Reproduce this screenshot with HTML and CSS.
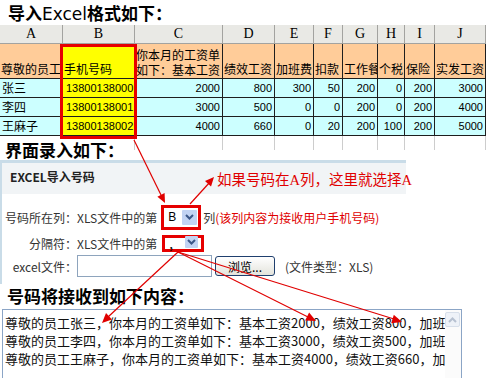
FILE: index.html
```html
<!DOCTYPE html>
<html lang="zh-CN">
<head>
    <meta charset="UTF-8">
    <meta name="viewport" content="width=device-width, initial-scale=1.0">
    <link rel="stylesheet" href="styles.css">
    <title>EXCEL导入号码</title>
</head>
<body>
    <h2 class="title title-first">导入<span class="latin">Excel</span>格式如下：</h2>

    <div class="sheet">
        <div class="grid">
            <div class="cell col">A</div>
            <div class="cell col">B</div>
            <div class="cell col">C</div>
            <div class="cell col">D</div>
            <div class="cell col">E</div>
            <div class="cell col">F</div>
            <div class="cell col">G</div>
            <div class="cell col">H</div>
            <div class="cell col">I</div>
            <div class="cell col">J</div>

            <div class="cell head">尊敬的员工</div>
            <div class="cell head tel">手机号码</div>
            <div class="cell head wrap">你本月的工资单<br>如下：基本工资</div>
            <div class="cell head">绩效工资</div>
            <div class="cell head">加班费</div>
            <div class="cell head">扣款</div>
            <div class="cell head">工作餐</div>
            <div class="cell head">个税</div>
            <div class="cell head">保险</div>
            <div class="cell head">实发工资</div>

            <div class="cell data name">张三</div>
            <div class="cell data tel num-l">13800138000</div>
            <div class="cell data n">2000</div>
            <div class="cell data n">800</div>
            <div class="cell data n">300</div>
            <div class="cell data n">50</div>
            <div class="cell data n">200</div>
            <div class="cell data n">0</div>
            <div class="cell data n">200</div>
            <div class="cell data n">3000</div>

            <div class="cell data name">李四</div>
            <div class="cell data tel num-l">13800138001</div>
            <div class="cell data n">3000</div>
            <div class="cell data n">500</div>
            <div class="cell data n">0</div>
            <div class="cell data n">0</div>
            <div class="cell data n">200</div>
            <div class="cell data n">0</div>
            <div class="cell data n">200</div>
            <div class="cell data n">4000</div>

            <div class="cell data name">王麻子</div>
            <div class="cell data tel num-l">13800138002</div>
            <div class="cell data n">4000</div>
            <div class="cell data n">660</div>
            <div class="cell data n">0</div>
            <div class="cell data n">20</div>
            <div class="cell data n">200</div>
            <div class="cell data n">100</div>
            <div class="cell data n">200</div>
            <div class="cell data n">5000</div>

            <div class="cell blank"></div>
            <div class="cell blank"></div>
            <div class="cell blank"></div>
            <div class="cell blank"></div>
            <div class="cell blank"></div>
            <div class="cell blank"></div>
            <div class="cell blank"></div>
            <div class="cell blank"></div>
            <div class="cell blank"></div>
            <div class="cell blank"></div>
        </div>
        <div class="pick"></div>
    </div>

    <h2 class="title title-second">界面录入如下：</h2>

    <div class="panel">
        <div class="panel-head">
            <span class="panel-name">EXCEL导入号码</span>
            <span class="note">如果号码在A列，这里就选择A</span>
        </div>
        <div class="form">
            <div class="row row-col">
                <span class="label">号码所在列：</span>
                <span class="hint">XLS文件中的第</span>
                <span class="mark mark-col">
                    <span class="combo-val">B</span>
                    <span class="combo-btn">
                        <svg width="9" height="6" viewBox="0 0 9 6"><path d="M1 1 L4.5 4.5 L8 1" fill="none" stroke="#3b5687" stroke-width="2"/></svg>
                    </span>
                </span>
                <span class="after">列<span class="red">(该列内容为接收用户手机号码)</span></span>
            </div>
            <div class="row row-sep">
                <span class="label">分隔符：</span>
                <span class="hint">XLS文件中的第</span>
                <span class="mark mark-sep">
                    <span class="combo-val">，</span>
                    <span class="combo-btn">
                        <svg width="9" height="6" viewBox="0 0 9 6"><path d="M1 1 L4.5 4.5 L8 1" fill="none" stroke="#3b5687" stroke-width="2"/></svg>
                    </span>
                </span>
            </div>
            <div class="row row-file">
                <span class="label">excel文件：</span>
                <span class="file-box"></span>
                <span class="file-btn">浏览...</span>
                <span class="file-type">(文件类型：XLS)</span>
            </div>
        </div>
    </div>

    <h2 class="title title-third">号码将接收到如下内容：</h2>

    <div class="msg">
        <div class="msg-text">
            <div>尊敬的员工张三，你本月的工资单如下：基本工资2000，绩效工资800，加班费300，扣款50</div>
            <div>尊敬的员工李四，你本月的工资单如下：基本工资3000，绩效工资500，加班费0，扣款0</div>
            <div>尊敬的员工王麻子，你本月的工资单如下：基本工资4000，绩效工资660，加班费0，扣款20</div>
        </div>
        <div class="msg-bar">
            <span class="msg-up">
                <svg width="9" height="6" viewBox="0 0 9 6"><path d="M1 5 L4.5 1.5 L8 5" fill="none" stroke="#b7c1d1" stroke-width="2"/></svg>
            </span>
        </div>
    </div>

    <!-- red arrows drawn over the screenshot -->
    <svg class="arrows" width="486" height="378" viewBox="0 0 486 378">
        <g stroke="#e00000" stroke-width="1.2" fill="none">
            <line x1="134" y1="140" x2="162" y2="197"/>
            <line x1="190" y1="204" x2="210" y2="182"/>
            <line x1="178" y1="252" x2="108" y2="317"/>
            <line x1="178" y1="252" x2="308" y2="317"/>
            <line x1="178" y1="252" x2="394" y2="319"/>
        </g>
        <g fill="#e00000">
            <polygon points="165,203 157.4,196.7 164.6,193.1"/>
            <polygon points="214,177 211,186.4 205,181.1"/>
            <polygon points="102,323 106,313 112,319.5"/>
            <polygon points="316,321 305.1,320.5 309.1,312.5"/>
            <polygon points="402,322 391.2,323.3 393.8,314.7"/>
        </g>
    </svg>
</body>
</html>
```

FILE: styles.css
```css
* {
    box-sizing: border-box;
}

body {
    margin: 0;
    width: 486px;
    height: 378px;
    overflow: hidden;
    position: relative;
    background: #fff;
    color: #000;
    font-family: "Noto Sans CJK SC", sans-serif;
}

.title {
    margin: 0;
    font-size: 17px;
    font-weight: bold;
}

.title .latin {
    font-family: "DejaVu Sans", sans-serif;
    font-weight: normal;
}

.title-first {
    height: 25px;
    line-height: 25px;
    padding-left: 8px;
}

.title-second {
    position: relative;
    width: fit-content;
    height: 21px;
    line-height: 21px;
    margin-top: -11px;
    padding: 0 4px 0 5px;
    background: #fff;
}

.title-third {
    height: 24px;
    line-height: 24px;
    padding-left: 7px;
}

/* spreadsheet */
.sheet {
    position: relative;
}

.grid {
    display: grid;
    grid-template-columns: 63px 72px 88px 52px 39px 29px 35px 27px 30px 51px;
    grid-template-rows: 19px 35px 19px 19px 19px 14px;
    font-size: 12px;
}

.cell {
    display: flex;
    align-items: flex-end;
    overflow: hidden;
    white-space: nowrap;
    line-height: 16px;
    padding: 0 1px 1px 2px;
    border-right: 1px solid #1e1e1e;
    border-bottom: 1px solid #1e1e1e;
}

.col {
    align-items: center;
    justify-content: center;
    padding: 0;
    background: #e9e9e5;
    border-color: #a3a3a0;
    font-family: "Liberation Serif", serif;
    font-size: 14px;
}

.head {
    background: #ffcc99;
    padding-left: 1px;
}

.wrap {
    white-space: normal;
    line-height: 15px;
}

.data {
    background: #ccffff;
}

.tel {
    background: #ffff00;
}

.num-l {
    padding-left: 3px;
    font-family: "Liberation Sans", sans-serif;
    font-size: 11px;
}

.n {
    justify-content: flex-end;
    padding-right: 2px;
    font-family: "Liberation Sans", sans-serif;
    font-size: 11px;
}

.blank {
    border-right-color: #cdcdcd;
    border-bottom: none;
}

.pick {
    position: absolute;
    left: 60px;
    top: 19px;
    width: 77px;
    height: 95px;
    border: 3px solid #e60000;
}

/* import panel */
.panel {
    width: 406px;
    border-top: 3px solid #c9dce8;
    border-left: 2px solid #c9dce8;
    font-size: 12px;
}

.panel-head {
    display: flex;
    align-items: flex-start;
    height: 31px;
    padding: 6px 0 0 8px;
    background: #f1f4f6;
}

.panel-name {
    flex: 0 0 207px;
    font-weight: bold;
    line-height: 16px;
    color: #222;
}

.note {
    margin-top: 1px;
    white-space: nowrap;
    color: #e00000;
    font-family: "Liberation Serif", "Noto Sans CJK SC", serif;
    font-size: 14.5px;
    line-height: 20px;
}

.form {
    padding: 10px 0 7px;
}

.row {
    display: flex;
    align-items: center;
    white-space: nowrap;
}

.row-col {
    height: 26px;
}

.row-sep {
    height: 18px;
    margin-top: 4px;
}

.row-file {
    height: 22px;
    margin-top: 3px;
}

.label {
    width: 75px;
    text-align: right;
    color: #333;
}

.hint {
    color: #333;
}

.mark {
    display: flex;
    border: 3px solid #e60000;
}

.mark-col {
    width: 40px;
    height: 25px;
    margin-left: 4px;
    align-items: center;
    padding: 0 1px 0 4px;
}

.mark-sep {
    width: 42px;
    height: 17px;
    margin-left: 5px;
    align-items: flex-start;
    padding: 0 3px 0 3px;
}

.combo-val {
    flex: 1;
    line-height: 12px;
    font-family: "Liberation Sans", "Noto Sans CJK SC", sans-serif;
    font-size: 12px;
}

.mark-sep .combo-val {
    font-family: "Noto Sans CJK SC", sans-serif;
    line-height: 11px;
    margin-top: 1px;
}

.combo-btn {
    display: flex;
    align-items: center;
    justify-content: center;
    width: 15px;
    height: 15px;
    background: #c2d3f3;
    border-radius: 1px;
}

.mark-sep .combo-btn {
    width: 13px;
    height: 12px;
    margin-top: -2px;
}

.after {
    margin-left: 2px;
    color: #333;
}

.red {
    color: #e00000;
}

.file-box {
    width: 135px;
    height: 22px;
    border: 1px solid #8ea4bd;
    background: #fff;
}

.file-btn {
    display: flex;
    align-items: center;
    justify-content: center;
    width: 60px;
    height: 20px;
    margin-left: 3px;
    border: 1px solid #1f3f6e;
    border-radius: 3px;
    background: linear-gradient(#ffffff, #e4e4dc);
}

.file-type {
    margin-left: 10px;
    color: #333;
}

/* message preview */
.msg {
    display: flex;
    width: 460px;
    height: 80px;
    margin: 1px 0 0 2px;
    border: 1px solid #8ba5c6;
}

.msg-text {
    flex: 1;
    overflow: hidden;
    white-space: nowrap;
    padding: 4px 0 0 2px;
    font-size: 13px;
    line-height: 18px;
    color: #111;
}

.msg-bar {
    width: 16px;
    padding-top: 2px;
    background: #fbfbfb;
}

.msg-up {
    display: flex;
    align-items: center;
    justify-content: center;
    width: 15px;
    height: 15px;
    background: #eef2f8;
    border: 1px solid #d7dfea;
    border-radius: 2px;
}

.arrows {
    position: absolute;
    left: 0;
    top: 0;
    pointer-events: none;
}
```
